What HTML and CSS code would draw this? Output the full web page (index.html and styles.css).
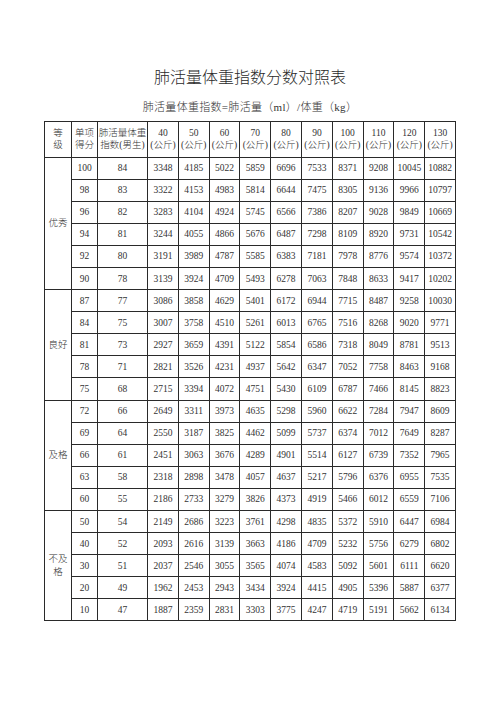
FILE: index.html
```html
<!DOCTYPE html>
<html lang="zh">
<head>
<meta charset="utf-8">
<title>肺活量体重指数分数对照表</title>
<link rel="stylesheet" href="styles.css">
</head>
<body>
<div class="page">
  <h1 class="title">肺活量体重指数分数对照表</h1>
  <p class="subtitle">肺活量体重指数=肺活量（ml）/体重（kg）</p>
  <table class="score">
    <colgroup>
      <col class="c-grade"><col class="c-score"><col class="c-index">
      <col class="c-w"><col class="c-w"><col class="c-w"><col class="c-w"><col class="c-w">
      <col class="c-w"><col class="c-w"><col class="c-w"><col class="c-w"><col class="c-w">
    </colgroup>
    <thead>
      <tr class="head">
        <th>等<br>级</th>
        <th>单项<br>得分</th>
        <th>肺活量体重<br>指数(男生)</th>
        <th>40<br>(公斤)</th>
        <th>50<br>(公斤)</th>
        <th>60<br>(公斤)</th>
        <th>70<br>(公斤)</th>
        <th>80<br>(公斤)</th>
        <th>90<br>(公斤)</th>
        <th>100<br>(公斤)</th>
        <th>110<br>(公斤)</th>
        <th>120<br>(公斤)</th>
        <th>130<br>(公斤)</th>
      </tr>
    </thead>
    <tbody>
      <tr><td rowspan="6" class="grade">优秀</td><td>100</td><td>84</td><td>3348</td><td>4185</td><td>5022</td><td>5859</td><td>6696</td><td>7533</td><td>8371</td><td>9208</td><td>10045</td><td>10882</td></tr>
      <tr><td>98</td><td>83</td><td>3322</td><td>4153</td><td>4983</td><td>5814</td><td>6644</td><td>7475</td><td>8305</td><td>9136</td><td>9966</td><td>10797</td></tr>
      <tr><td>96</td><td>82</td><td>3283</td><td>4104</td><td>4924</td><td>5745</td><td>6566</td><td>7386</td><td>8207</td><td>9028</td><td>9849</td><td>10669</td></tr>
      <tr><td>94</td><td>81</td><td>3244</td><td>4055</td><td>4866</td><td>5676</td><td>6487</td><td>7298</td><td>8109</td><td>8920</td><td>9731</td><td>10542</td></tr>
      <tr><td>92</td><td>80</td><td>3191</td><td>3989</td><td>4787</td><td>5585</td><td>6383</td><td>7181</td><td>7978</td><td>8776</td><td>9574</td><td>10372</td></tr>
      <tr><td>90</td><td>78</td><td>3139</td><td>3924</td><td>4709</td><td>5493</td><td>6278</td><td>7063</td><td>7848</td><td>8633</td><td>9417</td><td>10202</td></tr>
      <tr><td rowspan="5" class="grade">良好</td><td>87</td><td>77</td><td>3086</td><td>3858</td><td>4629</td><td>5401</td><td>6172</td><td>6944</td><td>7715</td><td>8487</td><td>9258</td><td>10030</td></tr>
      <tr><td>84</td><td>75</td><td>3007</td><td>3758</td><td>4510</td><td>5261</td><td>6013</td><td>6765</td><td>7516</td><td>8268</td><td>9020</td><td>9771</td></tr>
      <tr><td>81</td><td>73</td><td>2927</td><td>3659</td><td>4391</td><td>5122</td><td>5854</td><td>6586</td><td>7318</td><td>8049</td><td>8781</td><td>9513</td></tr>
      <tr><td>78</td><td>71</td><td>2821</td><td>3526</td><td>4231</td><td>4937</td><td>5642</td><td>6347</td><td>7052</td><td>7758</td><td>8463</td><td>9168</td></tr>
      <tr><td>75</td><td>68</td><td>2715</td><td>3394</td><td>4072</td><td>4751</td><td>5430</td><td>6109</td><td>6787</td><td>7466</td><td>8145</td><td>8823</td></tr>
      <tr><td rowspan="5" class="grade">及格</td><td>72</td><td>66</td><td>2649</td><td>3311</td><td>3973</td><td>4635</td><td>5298</td><td>5960</td><td>6622</td><td>7284</td><td>7947</td><td>8609</td></tr>
      <tr><td>69</td><td>64</td><td>2550</td><td>3187</td><td>3825</td><td>4462</td><td>5099</td><td>5737</td><td>6374</td><td>7012</td><td>7649</td><td>8287</td></tr>
      <tr><td>66</td><td>61</td><td>2451</td><td>3063</td><td>3676</td><td>4289</td><td>4901</td><td>5514</td><td>6127</td><td>6739</td><td>7352</td><td>7965</td></tr>
      <tr><td>63</td><td>58</td><td>2318</td><td>2898</td><td>3478</td><td>4057</td><td>4637</td><td>5217</td><td>5796</td><td>6376</td><td>6955</td><td>7535</td></tr>
      <tr><td>60</td><td>55</td><td>2186</td><td>2733</td><td>3279</td><td>3826</td><td>4373</td><td>4919</td><td>5466</td><td>6012</td><td>6559</td><td>7106</td></tr>
      <tr><td rowspan="5" class="grade">不及<br>格</td><td>50</td><td>54</td><td>2149</td><td>2686</td><td>3223</td><td>3761</td><td>4298</td><td>4835</td><td>5372</td><td>5910</td><td>6447</td><td>6984</td></tr>
      <tr><td>40</td><td>52</td><td>2093</td><td>2616</td><td>3139</td><td>3663</td><td>4186</td><td>4709</td><td>5232</td><td>5756</td><td>6279</td><td>6802</td></tr>
      <tr><td>30</td><td>51</td><td>2037</td><td>2546</td><td>3055</td><td>3565</td><td>4074</td><td>4583</td><td>5092</td><td>5601</td><td>6111</td><td>6620</td></tr>
      <tr><td>20</td><td>49</td><td>1962</td><td>2453</td><td>2943</td><td>3434</td><td>3924</td><td>4415</td><td>4905</td><td>5396</td><td>5887</td><td>6377</td></tr>
      <tr><td>10</td><td>47</td><td>1887</td><td>2359</td><td>2831</td><td>3303</td><td>3775</td><td>4247</td><td>4719</td><td>5191</td><td>5662</td><td>6134</td></tr>
    </tbody>
  </table>
</div>
</body>
</html>
```
FILE: styles.css
```css
html, body {
  margin: 0;
  padding: 0;
  background: #ffffff;
}

body {
  font-family: "Liberation Serif", "Noto Sans CJK SC", serif;
  color: #333;
}

.page {
  width: 500px;
  height: 707px;
  padding-top: 68px;
  box-sizing: border-box;
  display: flex;
  flex-direction: column;
  align-items: center;
}

.title {
  margin: 0;
  font-size: 16px;
  line-height: 20px;
  font-weight: 300;
  letter-spacing: 0;
  color: #2a2a2a;
}

.subtitle {
  margin: 11px 0 6px;
  font-size: 11px;
  line-height: 16px;
  letter-spacing: 0.3px;
  font-weight: 300;
  color: #333;
}

.score {
  border-collapse: collapse;
  table-layout: fixed;
  width: 411px;
  border: 1.5px solid #222;
  font-size: 9.5px;
}

.c-grade { width: 27px; }
.c-score { width: 26px; }
.c-index { width: 50px; }
.c-w { width: 30.8px; }

.score th,
.score td {
  border: 1px solid #2a2a2a;
  padding: 0;
  text-align: center;
  vertical-align: middle;
  font-weight: 400;
  white-space: nowrap;
  overflow: visible;
}

.score th {
  height: 34.5px;
  line-height: 12.5px;
  font-weight: 300;
}

.score td {
  height: 21.1px;
  line-height: 12px;
}

.score td.grade {
  line-height: 12.5px;
  font-weight: 300;
}
```
